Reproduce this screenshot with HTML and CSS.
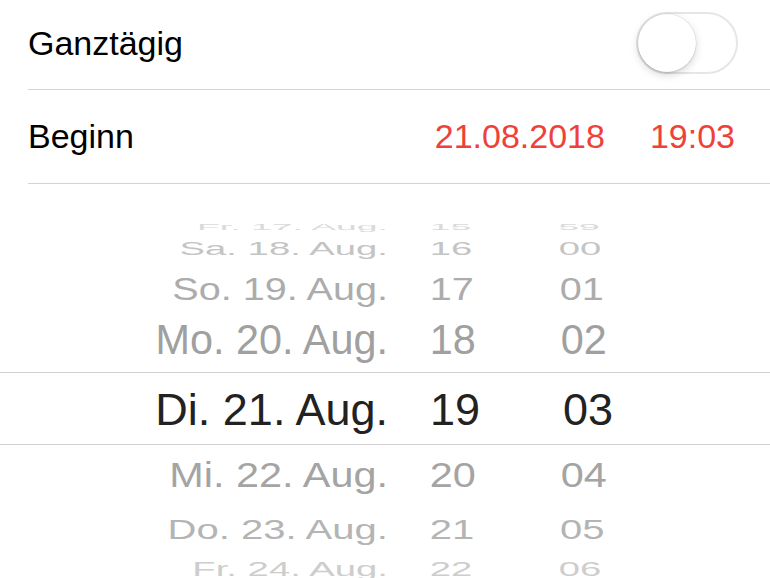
FILE: index.html
```html
<!DOCTYPE html>
<html lang="de">
<head>
<meta charset="utf-8">
<title>Termin</title>
<link rel="stylesheet" href="styles.css">
</head>
<body>
<div class="screen">
  <div class="cell-row row-allday">
    <span class="label">Ganztägig</span>
    <div class="toggle"><div class="knob"></div></div>
  </div>
  <div class="cell-row row-start">
    <span class="label">Beginn</span>
    <span class="value">21.08.2018</span>
    <span class="value time">19:03</span>
  </div>
  <div class="picker">
    <div class="wheel-row off-m4"><span class="c-date">Fr. 17. Aug.</span><span class="c-hour">15</span><span class="c-min">59</span></div>
    <div class="wheel-row off-m3"><span class="c-date">Sa. 18. Aug.</span><span class="c-hour">16</span><span class="c-min">00</span></div>
    <div class="wheel-row off-m2"><span class="c-date">So. 19. Aug.</span><span class="c-hour">17</span><span class="c-min">01</span></div>
    <div class="wheel-row off-m1"><span class="c-date">Mo. 20. Aug.</span><span class="c-hour">18</span><span class="c-min">02</span></div>
    <div class="wheel-row off-0"><span class="c-date">Di. 21. Aug.</span><span class="c-hour">19</span><span class="c-min">03</span></div>
    <div class="wheel-row off-p1"><span class="c-date">Mi. 22. Aug.</span><span class="c-hour">20</span><span class="c-min">04</span></div>
    <div class="wheel-row off-p2"><span class="c-date">Do. 23. Aug.</span><span class="c-hour">21</span><span class="c-min">05</span></div>
    <div class="wheel-row off-p3"><span class="c-date">Fr. 24. Aug.</span><span class="c-hour">22</span><span class="c-min">06</span></div>
    <div class="lens"></div>
  </div>
</div>
</body>
</html>
```
FILE: styles.css
```css
html, body {
  margin: 0;
  padding: 0;
  background: #ffffff;
  overflow: hidden;
}

.screen {
  width: 770px;
  height: 578px;
  overflow: hidden;
  font-family: "Liberation Sans", Arial, sans-serif;
  color: #000000;
}

.cell-row {
  display: flex;
  align-items: center;
  margin-left: 28px;
  border-bottom: 1px solid #d3d3d6;
  font-size: 34px;
}

.row-allday {
  height: 86px;
  padding-bottom: 3px;
  padding-right: 32px;
}

.row-start {
  height: 93px;
  padding-right: 35px;
}

.label {
  flex: 1;
}

.value {
  color: #ef4139;
}

.time {
  margin-left: 45px;
}

.toggle {
  width: 98px;
  height: 58px;
  border: 2px solid #e6e6e9;
  border-radius: 31px;
  display: flex;
  align-items: center;
  background: #ffffff;
}

.knob {
  width: 58px;
  height: 58px;
  border-radius: 50%;
  background: #ffffff;
  box-shadow: 0 3px 8px rgba(0, 0, 0, 0.16), 0 2px 1px rgba(0, 0, 0, 0.05), 0 0 0 0.5px rgba(0, 0, 0, 0.12);
}

/* wheel picker */
.picker {
  position: relative;
  height: 394px;
  overflow: hidden;
  padding-top: 34px;
  box-sizing: border-box;
  font-size: 45px;
}

.wheel-row {
  display: flex;
  --sx: 1;
  --sy: 1;
}

.wheel-row span {
  display: flex;
  align-items: center;
  height: 100%;
  white-space: nowrap;
  transform: scale(var(--sx), var(--sy));
}

.c-date {
  width: 388px;
  justify-content: flex-end;
  transform-origin: right center;
}

.c-hour {
  width: 134px;
  justify-content: center;
  transform-origin: 30% 50%;
}

.c-min {
  width: 132px;
  justify-content: center;
  transform-origin: 10% 50%;
}

.off-m4 { height: 18px; color: #dadada; --sx: 0.83; --sy: 0.2; }
.off-m3 { height: 25px; color: #c4c4c4; --sx: 0.85; --sy: 0.4; }
.off-m2 { height: 55px; color: #acacac; --sx: 0.88; --sy: 0.71; }
.off-m1 { height: 48px; color: #a0a0a0; --sx: 0.92; --sy: 0.95; }
.off-0  { height: 91px; color: #222222; }
.off-p1 { height: 39px; color: #a4a4a4; --sx: 0.92; --sy: 0.78; }
.off-p2 { height: 72px; color: #b4b4b4; --sx: 0.89; --sy: 0.62; }
.off-p3 { height: 8px;  color: #cdcdcd; --sx: 0.85; --sy: 0.43; }

.lens {
  position: absolute;
  left: 0;
  right: 0;
  top: 188px;
  height: 71px;
  border-top: 1px solid #d0d0d0;
  border-bottom: 1px solid #d0d0d0;
  pointer-events: none;
}
```
